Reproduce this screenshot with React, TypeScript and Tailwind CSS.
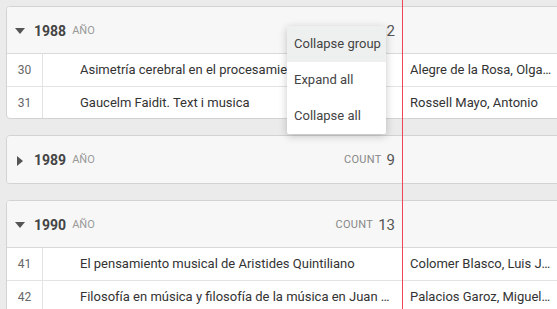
const groups = [
  {
    year: "1988",
    count: 2,
    open: true,
    rows: [
      {
        id: 30,
        title: "Asimetría cerebral en el procesamiento de la música",
        author: "Alegre de la Rosa, Olga María",
      },
      {
        id: 31,
        title: "Gaucelm Faidit. Text i musica",
        author: "Rossell Mayo, Antonio",
      },
    ],
  },
  { year: "1989", count: 9, open: false, rows: [] },
  {
    year: "1990",
    count: 13,
    open: true,
    rows: [
      {
        id: 41,
        title: "El pensamiento musical de Aristides Quintiliano",
        author: "Colomer Blasco, Luis José",
      },
      {
        id: 42,
        title: "Filosofía en música y filosofía de la música en Juan Luis Vives",
        author: "Palacios Garoz, Miguel Ángel",
      },
    ],
  },
];

const menuItems = ["Collapse group", "Expand all", "Collapse all"];

const App = () => {
  return (
    <div className="relative h-[309px] w-[557px] overflow-hidden bg-[#ebebeb] font-['Roboto',sans-serif]">
      <div className="flex w-[700px] flex-col gap-4 pt-[6px] pl-[6px]">
        {groups.map((group) => (
          <div
            key={group.year}
            className="overflow-hidden rounded-[4px] border border-[#d3d3d3] bg-white"
          >
            {/* Group header */}
            <div
              className={
                "flex h-[47px] items-center bg-[#f7f7f7]" +
                (group.open ? " border-b border-[#d9d9d9]" : "")
              }
            >
              <div className="flex w-[396px] items-center pt-[2px] pr-2 pl-[5px]">
                <div className="flex h-4 w-4 items-center justify-center">
                  {group.open ? (
                    <span className="h-0 w-0 border-x-[5px] border-t-[6px] border-x-transparent border-t-[#555]" />
                  ) : (
                    <span className="h-0 w-0 border-y-[5px] border-l-[6px] border-y-transparent border-l-[#555]" />
                  )}
                </div>
                <span className="ml-[6px] text-[14px] font-bold text-[#444]">
                  {group.year}
                </span>
                <span className="ml-[6px] text-[11px] text-[#999] uppercase">
                  Año
                </span>
                <span className="ml-auto text-[11px] tracking-[0.3px] text-[#888] uppercase">
                  Count
                </span>
                <span className="ml-[5px] text-[15px] text-[#555]">
                  {group.count}
                </span>
              </div>
            </div>

            {/* Rows */}
            {group.rows.map((row, i) => (
              <div
                key={row.id}
                className={
                  "flex h-[32px] items-center text-[13px] text-[#333]" +
                  (i > 0 ? " border-t border-[#e3e3e3]" : "")
                }
              >
                <div className="flex h-full w-[36px] items-center justify-center border-r border-[#e3e3e3] text-[12px] text-[#666]">
                  {row.id}
                </div>
                <div className="w-[359px] truncate pr-2 pl-[37px]">
                  {row.title}
                </div>
                <div className="w-[150px] truncate pl-2">{row.author}</div>
              </div>
            ))}
          </div>
        ))}
      </div>

      {/* Red marker line */}
      <div className="absolute top-0 left-[402px] h-full w-px bg-[#ee4459]" />

      {/* Context menu */}
      <div className="absolute top-[26px] left-[287px] w-[99px] rounded-[2px] bg-white shadow-[0_2px_8px_rgba(0,0,0,0.22)]">
        {menuItems.map((item, i) => (
          <div
            key={item}
            className={
              "flex h-[36px] items-center px-[7px] text-[13px] whitespace-nowrap text-[#444]" +
              (i === 0 ? " bg-[#eef0f0]" : "")
            }
          >
            {item}
          </div>
        ))}
      </div>
    </div>
  );
};

export default App;
